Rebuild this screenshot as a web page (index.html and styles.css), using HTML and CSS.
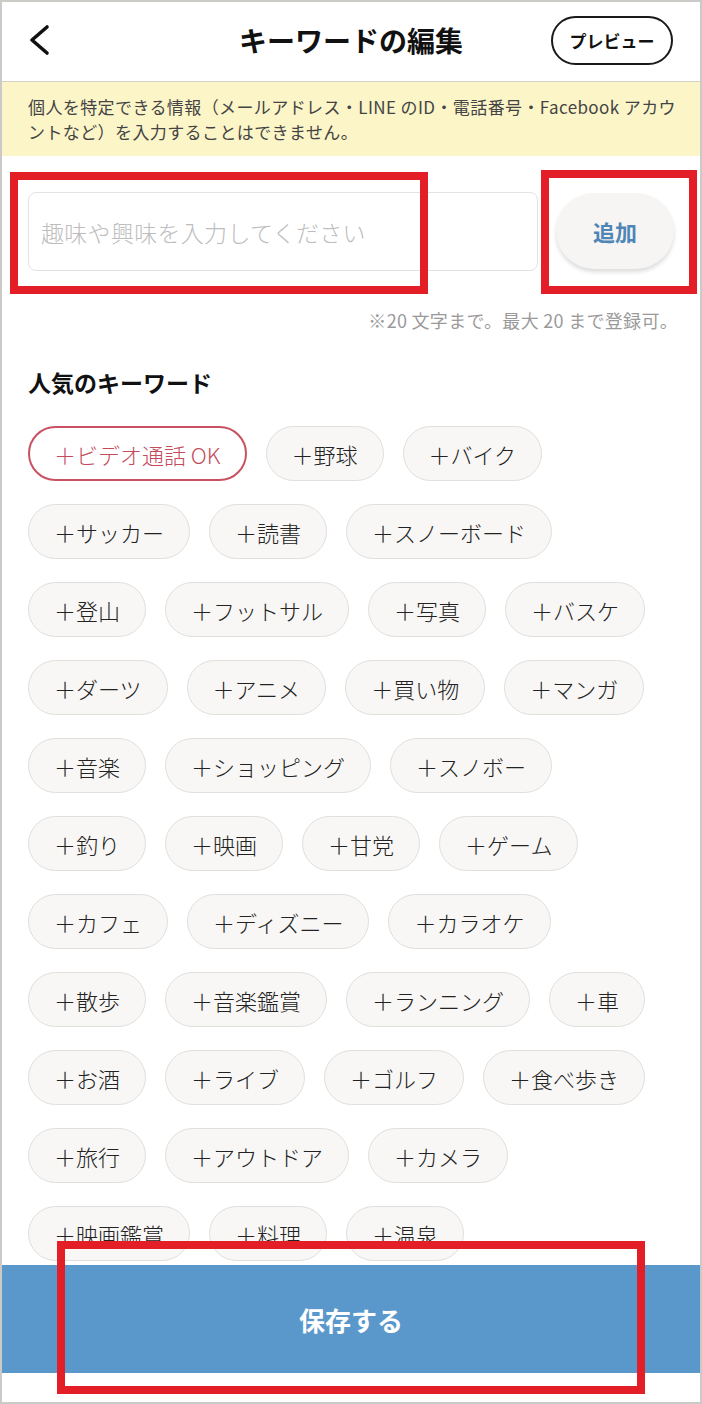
FILE: index.html
```html
<!DOCTYPE html>
<html lang="ja">
<head>
<meta charset="utf-8">
<title>キーワードの編集</title>
<link rel="stylesheet" href="styles.css">
</head>
<body>
<div class="app">
  <header class="topbar">
    <button class="back" aria-label="戻る">
      <svg width="24" height="34" viewBox="0 0 24 34"><polyline points="19,4 4,17 19,30" fill="none" stroke="#111" stroke-width="3.6" stroke-linecap="round" stroke-linejoin="round"/></svg>
    </button>
    <h1 class="title">キーワードの編集</h1>
    <button class="preview">プレビュー</button>
  </header>
  <div class="notice">個人を特定できる情報（メールアドレス・LINE のID・電話番号・Facebook アカウントなど）を入力することはできません。</div>
  <main class="content">
    <div class="input-row">
      <div class="field">趣味や興味を入力してください</div>
      <button class="add">追加</button>
    </div>
    <p class="note">※20 文字まで。最大 20 まで登録可。</p>
    <h2 class="heading">人気のキーワード</h2>
    <div class="chips">
      <span class="chip chip-hot">＋ビデオ通話 OK</span>
      <span class="chip">＋野球</span>
      <span class="chip">＋バイク</span>
      <span class="chip">＋サッカー</span>
      <span class="chip">＋読書</span>
      <span class="chip">＋スノーボード</span>
      <span class="chip">＋登山</span>
      <span class="chip">＋フットサル</span>
      <span class="chip">＋写真</span>
      <span class="chip">＋バスケ</span>
      <span class="chip">＋ダーツ</span>
      <span class="chip">＋アニメ</span>
      <span class="chip">＋買い物</span>
      <span class="chip">＋マンガ</span>
      <span class="chip">＋音楽</span>
      <span class="chip">＋ショッピング</span>
      <span class="chip">＋スノボー</span>
      <span class="chip">＋釣り</span>
      <span class="chip">＋映画</span>
      <span class="chip">＋甘党</span>
      <span class="chip">＋ゲーム</span>
      <span class="chip">＋カフェ</span>
      <span class="chip">＋ディズニー</span>
      <span class="chip">＋カラオケ</span>
      <span class="chip">＋散歩</span>
      <span class="chip">＋音楽鑑賞</span>
      <span class="chip">＋ランニング</span>
      <span class="chip">＋車</span>
      <span class="chip">＋お酒</span>
      <span class="chip">＋ライブ</span>
      <span class="chip">＋ゴルフ</span>
      <span class="chip">＋食べ歩き</span>
      <span class="chip">＋旅行</span>
      <span class="chip">＋アウトドア</span>
      <span class="chip">＋カメラ</span>
      <span class="chip">＋映画鑑賞</span>
      <span class="chip">＋料理</span>
      <span class="chip">＋温泉</span>
    </div>
  </main>
  <footer class="footer">
    <button class="save">保存する</button>
  </footer>
  <div class="mark mark-input"></div>
  <div class="mark mark-add"></div>
  <div class="mark mark-save"></div>
</div>
</body>
</html>
```
FILE: styles.css
```css
* { box-sizing: border-box; }
html, body { margin: 0; padding: 0; background: #fff; }
body {
  font-family: "Noto Sans CJK JP", "Noto Sans", "Liberation Sans", sans-serif;
  color: #222;
}
button { font-family: inherit; }
.app {
  position: relative;
  width: 702px;
  height: 1404px;
  border: 2px solid #cbcac6;
  display: flex;
  flex-direction: column;
  overflow: hidden;
  background: #fff;
}
.topbar {
  height: 80px;
  flex: none;
  border-bottom: 1px solid #d2d0c8;
  display: flex;
  align-items: center;
  justify-content: space-between;
  padding: 0 27px 0 26px;
  position: relative;
}
.back {
  background: none;
  border: none;
  padding: 0;
  width: 24px;
  height: 34px;
  display: flex;
  margin-top: -4px;
}
.title {
  position: absolute;
  left: 0;
  right: 0;
  text-align: center;
  margin: 0;
  font-size: 28px;
  font-weight: 700;
  color: #111;
  line-height: 40px;
  pointer-events: none;
  letter-spacing: 0;
  transform: translateY(-2px);
}
.preview {
  width: 122px;
  height: 49px;
  border: 2px solid #1a1a1a;
  border-radius: 25px;
  background: #fff;
  font-size: 17px;
  font-weight: 700;
  color: #111;
  padding: 0;
  margin-top: -2px;
}
.notice {
  flex: none;
  height: 74px;
  background: #fcf5c8;
  padding: 12px 24px 12px 26px;
  font-size: 17px;
  line-height: 25px;
  color: #444;
  letter-spacing: 0.4px;
}
.content {
  flex: 1;
  overflow: hidden;
  padding: 36px 26px 0 26px;
}
.input-row {
  display: flex;
  align-items: center;
  gap: 18px;
}
.field {
  width: 510px;
  height: 79px;
  border: 1px solid #e3e3e3;
  border-radius: 8px;
  padding: 0 12px;
  display: flex;
  align-items: center;
  font-size: 23px;
  font-weight: 300;
  color: #bdbdbd;
  letter-spacing: 0.3px;
}
.add {
  width: 118px;
  height: 76px;
  border: none;
  border-radius: 38px;
  background: #f6f5f3;
  box-shadow: 0 3px 4px rgba(0, 0, 0, 0.14);
  font-size: 22px;
  font-weight: 700;
  color: #4f86b5;
  padding: 0;
  margin-top: -1px;
}
.note {
  margin: 37px -4px 0 0;
  text-align: right;
  font-size: 18px;
  line-height: 24px;
  color: #9a9a9a;
  letter-spacing: 0.3px;
}
.heading {
  margin: 35px 0 0 0;
  font-size: 23px;
  line-height: 30px;
  font-weight: 700;
  color: #111;
}
.chips {
  margin-top: 29px;
  width: 629px;
  display: flex;
  flex-wrap: wrap;
  gap: 23px 19px;
}
.chip {
  height: 55px;
  border: 1px solid #e0dfdc;
  border-radius: 28px;
  background: #f8f7f5;
  padding: 0 25px;
  display: flex;
  align-items: center;
  font-size: 22px;
  font-weight: 300;
  color: #222;
  white-space: nowrap;
}
.chip-hot {
  background: #fff;
  border: 2px solid #c95262;
  color: #c44b5c;
  padding: 0 24px;
}
.footer {
  flex: none;
  padding-bottom: 29px;
  background: #fff;
}
.save {
  display: block;
  width: 100%;
  height: 108px;
  border: none;
  background: #5a98cb;
  color: #fff;
  font-size: 26px;
  font-weight: 700;
  padding: 0;
}
.mark {
  position: absolute;
  border: 8px solid #e41e26;
  pointer-events: none;
}
.mark-input { left: 8px; top: 170px; width: 418px; height: 122px; }
.mark-add { left: 539px; top: 168px; width: 156px; height: 124px; }
.mark-save { left: 55px; top: 1239px; width: 588px; height: 153px; }
```
